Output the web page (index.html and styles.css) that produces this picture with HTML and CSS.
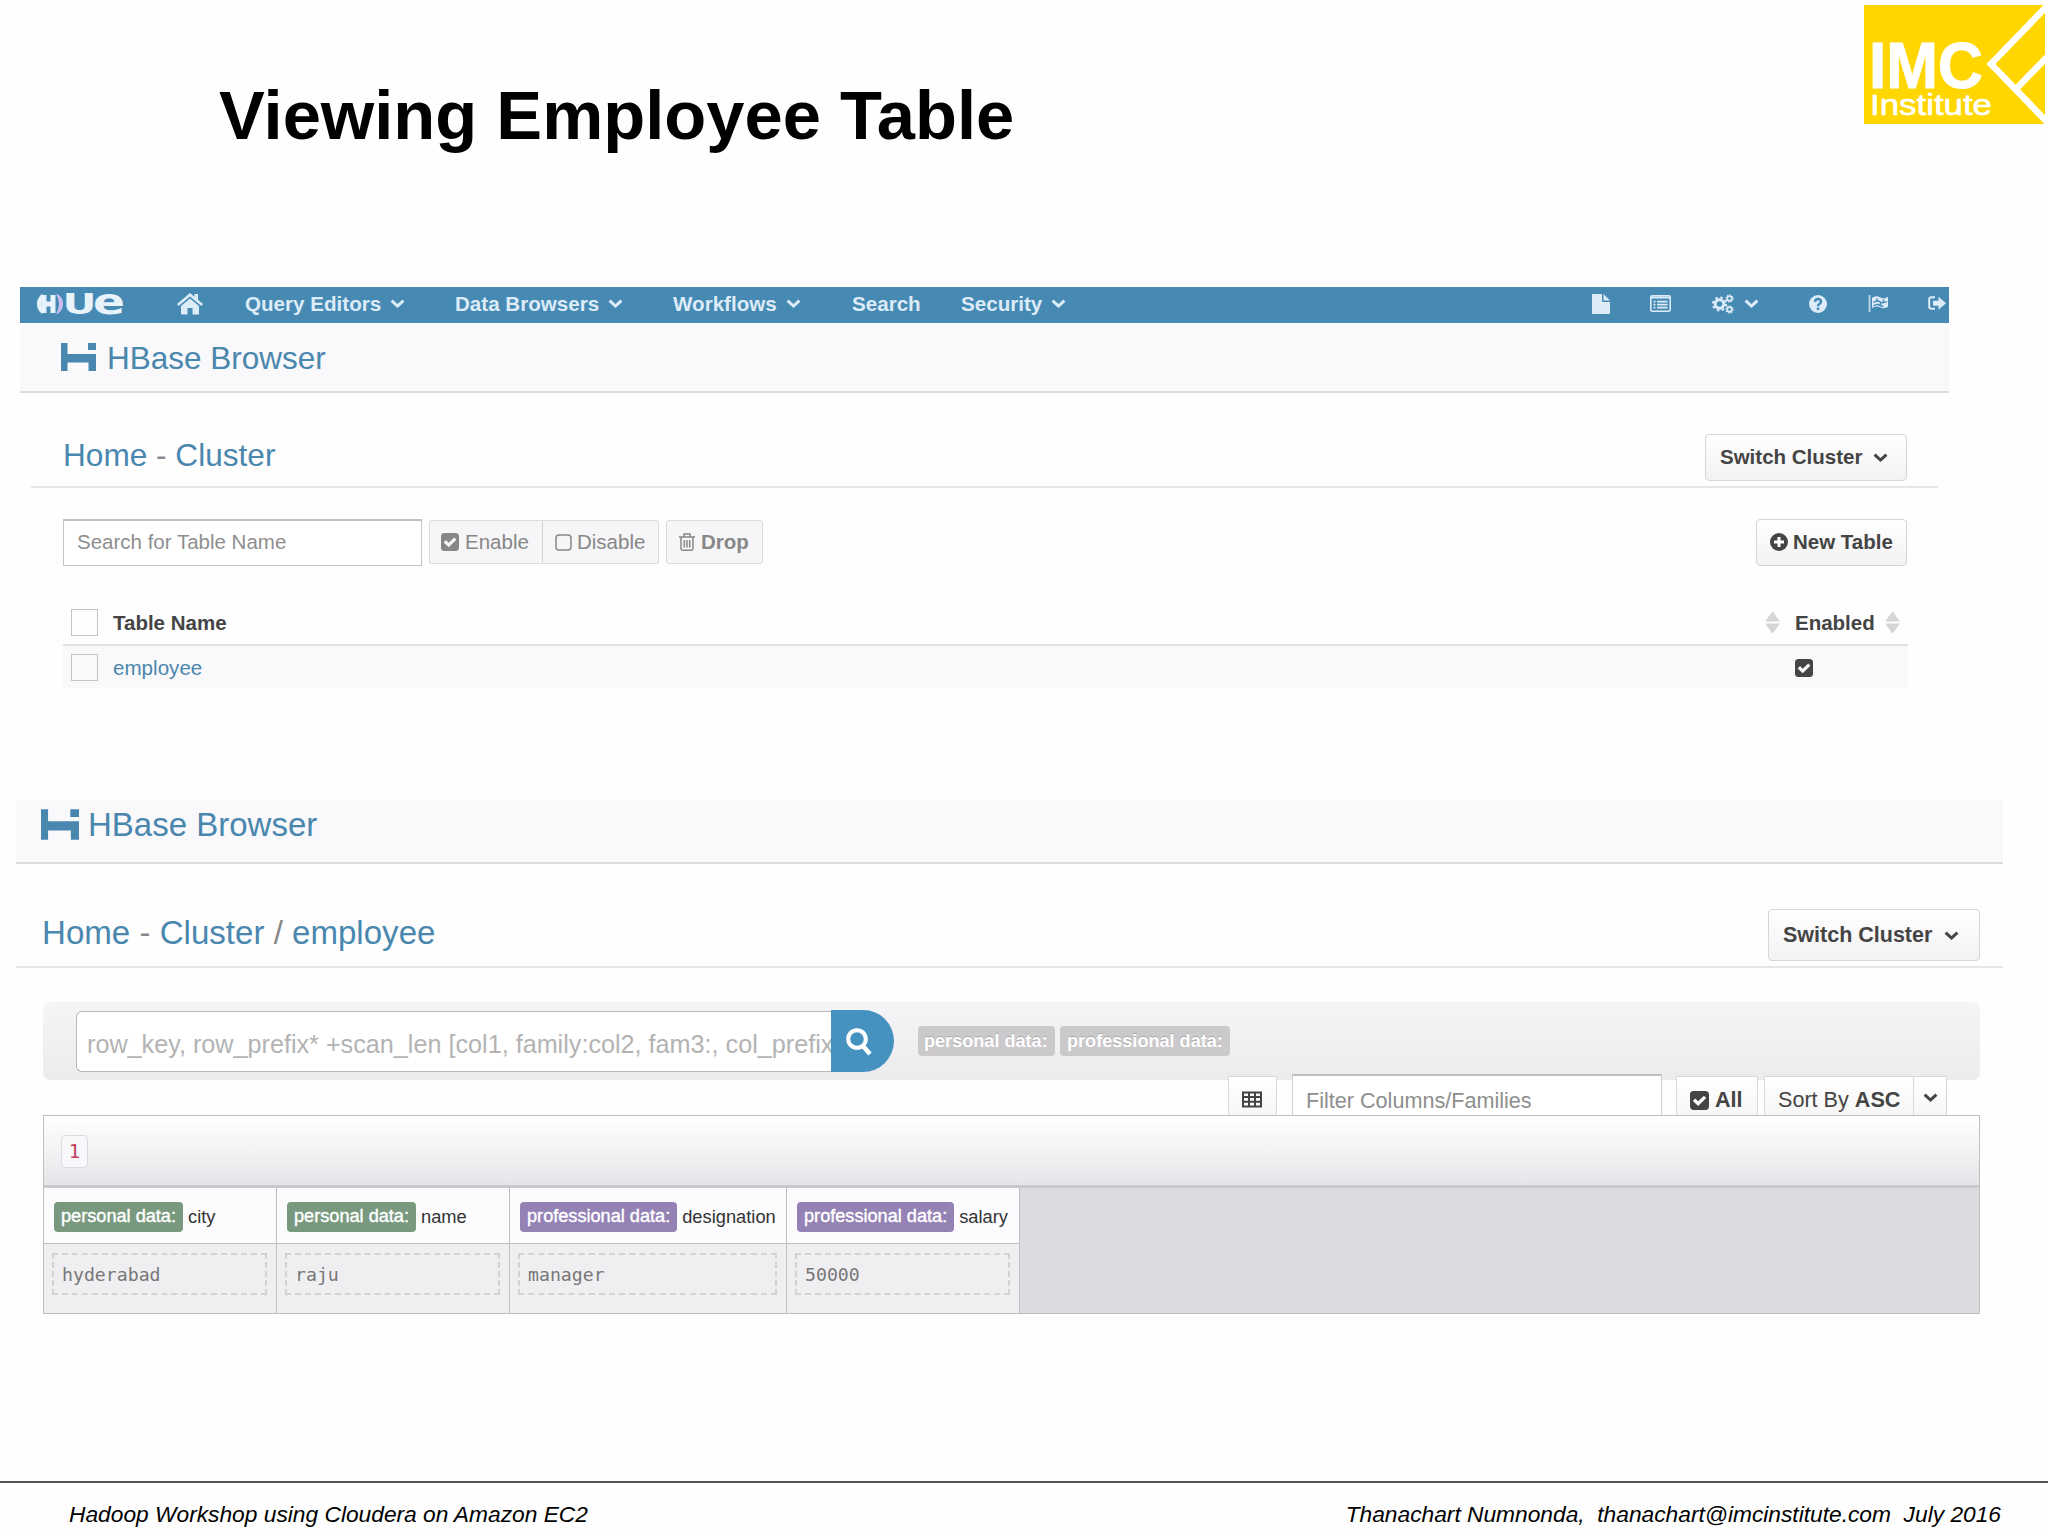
FILE: index.html
```html
<!DOCTYPE html>
<html lang="en">
<head>
<meta charset="utf-8">
<title>Viewing Employee Table</title>
<link rel="stylesheet" href="styles.css">
</head>
<body>
<svg class="defs" width="0" height="0">
  <symbol id="chev" viewBox="0 0 15 9"><path d="M1.6 1.6 7.5 7l5.9-5.4" fill="none" stroke="currentColor" stroke-width="3"/></symbol>
  <symbol id="check" viewBox="0 0 18 18"><path fill="currentColor" fill-rule="evenodd" d="M3.5 0h11A3.5 3.5 0 0 1 18 3.500v11a3.500 3.500 0 0 1-3.500 3.500h-11A3.500 3.500 0 0 1 0 14.500v-11A3.500 3.500 0 0 1 3.500 0zM7.700 14.200l7.700-7.500-2.200-2.300-5.500 5.400-2.700-2.700-2.300 2.300z"/></symbol>
  <symbol id="hbase" viewBox="0 0 35 28"><path fill="currentColor" d="M0 0h6.500v11H35v17h-7.500v-8.500h-21V28H0zM27 0h8v7h-8z"/></symbol>
  <symbol id="sort" viewBox="0 0 16 24"><path fill="currentColor" d="M8 0l8 11H0zM8 24L0 13h16z"/></symbol>
</svg>
<div class="slide">
  <header class="top">
    <h1>Viewing Employee Table</h1>
    <svg class="brand" viewBox="0 0 181 119" width="181" height="119">
      <rect width="181" height="119" fill="#ffd600"/>
      <path d="M183 1 127 59l56 58M153 83l30-31" fill="none" stroke="#fff" stroke-width="6.500"/>
      <text class="imc" x="5" y="83" textLength="114" lengthAdjust="spacingAndGlyphs">IMC</text>
      <text class="inst" x="6" y="110" textLength="122" lengthAdjust="spacingAndGlyphs">Institute</text>
    </svg>
  </header>

  <section class="shot first">
    <nav class="nav">
      <svg class="hue" viewBox="0 0 88 24" width="88" height="24">
        <path d="M6.500 1.500Q-1 7 1.500 16q1.500 4 5 6l-1-10z" fill="#e8f2fa"/>
        <path d="M8 3v18M8 12h9M17 3v18" fill="none" stroke="#e8f2fa" stroke-width="5"/>
        <path d="M20 1.500q7 3 7 10.500t-7 10.500q3-5 3-10.500t-3-10.500z" fill="#cdbcf0"/>
        <text class="hue-u" x="26.500" y="21.500" textLength="34" lengthAdjust="spacingAndGlyphs">U</text>
        <text class="hue-e" x="57" y="21.500" textLength="32" lengthAdjust="spacingAndGlyphs">e</text>
      </svg>
      <svg class="home" viewBox="0 0 26 22" width="26" height="22"><path fill="currentColor" d="M13 5.500l9 7.500v8.500h-6.500V15h-5v6.500H4V13zM13 0l4.500 3.800V1H21v5.800l5 4.200-1.600 2L13 3.400 1.600 13 0 11z"/></svg>
      <span class="item">Query Editors<svg class="chev"><use href="#chev"/></svg></span>
      <span class="item">Data Browsers<svg class="chev"><use href="#chev"/></svg></span>
      <span class="item">Workflows<svg class="chev"><use href="#chev"/></svg></span>
      <span class="item">Search</span>
      <span class="item">Security<svg class="chev"><use href="#chev"/></svg></span>
      <svg viewBox="0 0 18 20" width="18" height="20"><path fill="currentColor" d="M0 1q0-1 1-1h9v7q0 1 1 1h7v11q0 1-1 1H1q-1 0-1-1zM11.500 0L18 6.500h-6.500z"/></svg>
      <svg viewBox="0 0 21 17" width="21" height="17"><rect x=".8" y=".8" width="19.400" height="15.400" rx="1.500" fill="none" stroke="currentColor" stroke-width="1.600"/><path d="M1 2.500h19M3.500 6.700h2M7 6.700h10.500M3.500 9.700h2M7 9.700h10.500M3.500 12.700h2M7 12.700h10.500" stroke="currentColor" stroke-width="1.800"/></svg>
      <span class="item gears"><svg viewBox="0 0 22 20" width="22" height="20" fill="none" stroke="currentColor"><circle cx="7.500" cy="10" r="4.300" stroke-width="3"/><circle cx="7.500" cy="10" r="6.500" stroke-width="2" stroke-dasharray="2.550 2.550"/><circle cx="17.500" cy="4.500" r="2.300" stroke-width="1.800"/><circle cx="17.500" cy="4.500" r="3.600" stroke-width="1.200" stroke-dasharray="1.410 1.410"/><circle cx="17.500" cy="15.500" r="2.300" stroke-width="1.800"/><circle cx="17.500" cy="15.500" r="3.600" stroke-width="1.200" stroke-dasharray="1.410 1.410"/></svg><svg class="chev"><use href="#chev"/></svg></span>
      <svg viewBox="0 0 18 18" width="18" height="18"><circle cx="9" cy="9" r="9" fill="currentColor"/><path d="M6 6.800Q6.300 4 9 4t3 2.600Q12 8 10.300 9 9 9.700 9 11.200M9 12.500V15" fill="none" stroke="#468ab4" stroke-width="2.500"/></svg>
      <svg viewBox="0 0 21 17" width="21" height="17"><path d="M1.500 0v17" stroke="currentColor" stroke-width="1.800" opacity=".8"/><path d="M4 2.800q4-3 8-.500t8-.500v10q-4 2.500-8 .5T4 13z" fill="currentColor"/><path d="M5.500 7.500Q7.500 6 9 6V3.500M9 6q2 0 3.500 1t3 .5V4.500M12.500 7v3.500q-2-1-3.500-1t-3.500 1.500M15.500 7.500q2 0 3.500-1M12.500 10.500q1.500 1 3 .7" fill="none" stroke="#468ab4" stroke-width="1.500"/></svg>
      <svg viewBox="0 0 18 15" width="18" height="15"><path d="M7 1.200H3.500Q1.200 1.200 1.200 3.500v7q0 2.300 2.300 2.300H7" fill="none" stroke="currentColor" stroke-width="2"/><path fill="currentColor" d="M5 4.700h5.500V.8L18 7.200l-7.500 6.500V9.800H5z"/></svg>
    </nav>
    <div class="band"><svg class="hb"><use href="#hbase"/></svg><span>HBase Browser</span></div>
    <div class="crumbs">
      <div><a>Home</a> - <a>Cluster</a></div>
      <div class="btn switch">Switch Cluster<svg class="chev"><use href="#chev"/></svg></div>
    </div>
    <div class="tools">
      <div class="search">Search for Table Name</div>
      <div class="group">
        <div class="act en"><svg width="18" height="18"><use href="#check"/></svg>Enable</div>
        <div class="act dis"><svg viewBox="0 0 17 17" width="17" height="17"><rect x="1" y="1" width="15" height="15" rx="3" fill="none" stroke="currentColor" stroke-width="1.500"/></svg>Disable</div>
      </div>
      <div class="act drop"><svg viewBox="0 0 16 18" width="16" height="18"><path d="M0 4h16M5 4V1h6v3M2 4v11.500q0 1.700 1.700 1.700h8.600q1.700 0 1.700-1.700V4M5.300 7v7.500M8 7v7.500M10.700 7v7.500" fill="none" stroke="currentColor" stroke-width="1.500"/></svg>Drop</div>
      <div class="btn new"><svg viewBox="0 0 18 18" width="18" height="18"><circle cx="9" cy="9" r="9" fill="currentColor"/><path d="M9 4v10M4 9h10" stroke="#fff" stroke-width="3"/></svg>New Table</div>
    </div>
    <div class="list">
      <div class="lrow lhead"><i class="box"></i><span>Table Name</span><svg class="sort"><use href="#sort"/></svg><span>Enabled</span><svg class="sort"><use href="#sort"/></svg></div>
      <div class="lrow lbody"><i class="box"></i><a>employee</a><span></span><svg width="18" height="18"><use href="#check"/></svg></div>
    </div>
  </section>

  <section class="shot second">
    <div class="band"><svg class="hb"><use href="#hbase"/></svg><span>HBase Browser</span></div>
    <div class="crumbs">
      <div><a>Home</a> - <a>Cluster</a> / <a>employee</a></div>
      <div class="btn switch">Switch Cluster<svg class="chev"><use href="#chev"/></svg></div>
    </div>
    <div class="query">
      <div class="qinput">row_key, row_prefix* +scan_len [col1, family:col2, fam3:, col_prefix</div>
      <div class="go"><svg viewBox="0 0 26 28" width="26" height="28"><circle cx="11" cy="11" r="8.800" fill="none" stroke="#fff" stroke-width="4"/><path d="M17 18l7 8" stroke="#fff" stroke-width="4.500"/></svg></div>
      <span class="qtag qa">personal data:</span><span class="qtag qb">professional data:</span>
    </div>
    <div class="filters">
      <div class="fb f1"><svg viewBox="0 0 20 17" width="20" height="17"><path d="M1 1.500h18v14H1zM1 6h18M1 10.700h18M7 1v15M13 1v15" fill="none" stroke="currentColor" stroke-width="2"/></svg></div>
      <div class="finput">Filter Columns/Families</div>
      <div class="fb f2"><svg width="19" height="19" viewBox="0 0 18 18"><use href="#check"/></svg><b>All</b></div>
      <div class="fb f3">Sort By&nbsp;<b>ASC</b></div>
      <div class="fb f4"><svg class="chev"><use href="#chev"/></svg></div>
    </div>
    <div class="rows">
      <div class="rhead"><span class="key">1</span></div>
      <div class="cells">
        <div class="cell"><div class="ch"><span class="tag g">personal data:</span>city</div><div class="cv"><div>hyderabad</div></div></div>
        <div class="cell"><div class="ch"><span class="tag g">personal data:</span>name</div><div class="cv"><div>raju</div></div></div>
        <div class="cell"><div class="ch"><span class="tag p">professional data:</span>designation</div><div class="cv"><div>manager</div></div></div>
        <div class="cell"><div class="ch"><span class="tag p">professional data:</span>salary</div><div class="cv"><div>50000</div></div></div>
      </div>
    </div>
  </section>

  <footer><span class="left">Hadoop Workshop using Cloudera on Amazon EC2</span><span>Thanachart Numnonda,&nbsp; thanachart@imcinstitute.com&nbsp; July 2016</span></footer>
</div>
</body>
</html>
```
FILE: styles.css
```css
* { box-sizing: border-box; }
body { margin: 0; background: #fefefe; font-family: "Liberation Sans", Arial, sans-serif; }
svg { display: block; flex: none; }
.defs { position: absolute; }
.slide { width: 2048px; height: 1536px; display: flex; flex-direction: column; overflow: hidden; white-space: nowrap; }

.top { height: 287px; display: flex; justify-content: space-between; padding: 5px 3px 0 219px; }
h1 { margin: 71px 0 0; font-size: 68.7px; line-height: 80px; color: #000; }
.imc { font: bold 65px "Liberation Sans", sans-serif; fill: #fff; stroke: #fff; stroke-width: 1px; stroke-linejoin: round; }
.inst { font: 29px "Liberation Sans", sans-serif; fill: #fff; stroke: #fff; stroke-width: .6px; stroke-linejoin: round; }

.shot { color: #444; }
a { color: #4a87ae; }
.chev { width: 15px; height: 9px; }

.first { width: 1929px; height: 513px; margin-left: 20px; font-size: 20.6px; }
.nav {
  height: 36px; padding: 0 0 3px 16px; background: #468ab4; color: #dcebf8; font-weight: bold;
  display: grid; align-items: center;
  grid-template-columns: 141px 68px 210px 218px 179px 109px 631px 58px 62px 97px 59px 60px 21px;
}
.item { display: flex; align-items: center; gap: 9px; }
.gears { gap: 10px; }
.hue { overflow: visible; }
.hue-u { font: bold 28px "DejaVu Sans", sans-serif; fill: #e8f2fa; }
.hue-e { font: bold 36px "DejaVu Sans", sans-serif; fill: #e8f2fa; }

.band { display: flex; align-items: center; background: #f9f8fa; color: #4a87ae; border-bottom: 2px solid #dddde0; }
.first .band { height: 70px; padding: 0 0 0 41px; gap: 11px; font-size: 31.5px; }
.first .band span { padding-top: 2px; }
.first .hb { width: 35px; height: 28px; }
.crumbs { display: flex; justify-content: space-between; border-bottom: 2px solid #e6e6e9; color: #888; }
.first .crumbs { margin: 0 11px 0 11px; height: 95px; padding: 41px 31px 0 32px; font-size: 31.6px; line-height: 42px; }
.btn {
  display: flex; align-items: center; font-weight: bold; color: #444;
  border: 1px solid #d6d5d8; border-radius: 4px; background: linear-gradient(#fff, #f2f2f3);
}
.first .btn { font-size: 20.5px; height: 47px; line-height: 24px; }
.first .switch { width: 202px; padding: 0 0 1px 14px; gap: 11px; }
.first .new { width: 151px; margin-left: auto; padding: 0 0 1px 13px; gap: 5px; }
.tools { display: flex; margin: 31px 42px 0 43px; height: 47px; color: #878787; }
.search { width: 359px; border: 1px solid #c4c4c6; border-top: 2px solid #c0c0c2; background: #fff; padding-left: 13px; line-height: 42px; font-size: 20.5px; color: #8e8e8e; }
.group { display: flex; margin: 1px 7px 0 7px; height: 44px; }
.act { display: flex; align-items: center; gap: 6px; height: 44px; border: 1px solid #dcdcde; background: #f6f6f8; border-radius: 3px; font-size: 20.5px; }
.en { width: 114px; padding-left: 11px; border-radius: 3px 0 0 3px; border-right: 1px solid #d2d2d4; }
.dis { width: 116px; padding-left: 12px; gap: 5px; border-left: 0; border-radius: 0 3px 3px 0; }
.drop { width: 97px; margin-top: 1px; padding-left: 12px; font-weight: bold; }
.list { margin: 34px 41px 0 43px; }
.lrow { display: grid; align-items: center; grid-template-columns: 42px 1652px 30px 90px 16px; padding-left: 8px; }
.lhead { height: 46px; padding-top: 1px; border-bottom: 2px solid #e2e2e5; font-weight: bold; font-size: 20.5px; }
.lbody { height: 42px; padding-top: 1px; background: #f9f8fb; }
.box { width: 27px; height: 27px; border: 1px solid #c4c4c6; }
.sort { width: 15px; height: 23px; color: #d6d5d8; }

.second { width: 1987px; height: 681px; margin-left: 16px; font-size: 21.6px; }
.second .band { height: 64px; padding: 0 0 14px 25px; gap: 9px; font-size: 33px; }
.second .band span { padding-top: 2px; }
.second .hb { width: 38px; height: 31px; }
.second .crumbs { height: 104px; padding: 45px 23px 0 26px; font-size: 33.1px; line-height: 48px; }
.second .switch { width: 212px; height: 52px; font-size: 21.5px; line-height: 26px; padding-left: 14px; gap: 12px; }
.query { display: flex; margin: 34px 23px 0 27px; height: 78px; padding: 8px 0 0 33px; border-radius: 7px; background: linear-gradient(#f5f4f6, #ecebed); }
.qinput { width: 755px; height: 61px; margin-top: 1px; border: 1px solid #b8b8ba; border-right: 0; border-radius: 6px 0 0 6px; background: #fff; padding-left: 10px; overflow: hidden; font-size: 25.2px; line-height: 64px; color: #b3b3b3; }
.go { width: 63px; height: 62px; border-radius: 0 31px 31px 0; background: #4592c0; padding: 18px 0 0 15px; }
.qtag { height: 30px; margin-top: 16px; border-radius: 4px; background: #cbc9cb; color: #fff; font-weight: bold; font-size: 18.1px; line-height: 30px; padding-left: 6px; text-shadow: 0 -1px 0 #aaa; }
.qa { width: 137px; margin-left: 24px; }
.qb { width: 170px; margin-left: 5px; padding-left: 7px; }
.filters { position: relative; display: flex; align-items: flex-end; margin: -6px 0 0 1212px; height: 41px; }
.fb { display: flex; align-items: center; height: 39px; padding-top: 8px; border: 1px solid #d9d8db; border-bottom: 0; background: linear-gradient(#fff, #f6f6f7); color: #444; }
.f1 { width: 49px; padding-left: 13px; padding-top: 6px; }
.finput { width: 370px; height: 41px; margin: 0 14px 0 15px; border: 1px solid #d0d0d2; border-top: 2px solid #c0c0c2; border-bottom: 0; background: #fff; color: #8e8e8e; padding-left: 13px; line-height: 49px; }
.f2 { width: 82px; padding-left: 13px; padding-top: 8px; gap: 6px; }
.f3 { width: 150px; margin-left: 6px; padding-left: 13px; padding-top: 8px; }
.f4 { width: 33px; border-left: 0; padding: 2px 0 0 9px; }
.rows { margin: 0 23px 0 27px; height: 199px; border: 1px solid #bfbec1; background: #dddbdf; }
.rhead { height: 72px; border-bottom: 3px solid #cbc9cc; background: linear-gradient(#fff, #f3f2f4 50%, #e6e4e8); padding: 19px 0 0 17px; }
.key { display: block; width: 27px; height: 33px; border: 1px solid #dcdbe0; border-radius: 4px; background: #f8f8fa; color: #c43c5e; font: 19px/31px "DejaVu Sans Mono", monospace; text-align: center; }
.cells { display: grid; grid-template-columns: 233px 233px 277px 233px; height: 125px; }
.cell { border-right: 1px solid #bfbec1; background: #efeef1; font-size: 18.3px; color: #333; }
.ch { height: 56px; display: flex; align-items: center; gap: 5px; padding: 2px 0 0 10px; border-bottom: 1px solid #bfbec1; background: #fcfbfd; }
.tag { height: 30px; line-height: 29px; padding: 0 7px; border-radius: 4px; color: #fff; -webkit-text-stroke: .4px #fff; font-size: 18.15px; }
.g { background: #79997f; }
.p { background: #9582b5; }
.cv { padding: 9px 9px 0 8px; }
.cv div { height: 42px; border: 2px dashed #d3d2d5; padding-left: 8px; font: 18.2px/39px "DejaVu Sans Mono", monospace; color: #777; }

footer { margin-top: auto; height: 55px; border-top: 2px solid #555; display: flex; justify-content: space-between; padding: 18px 47px 0 69px; font-style: italic; font-size: 22.75px; line-height: 26px; color: #000; }
```
